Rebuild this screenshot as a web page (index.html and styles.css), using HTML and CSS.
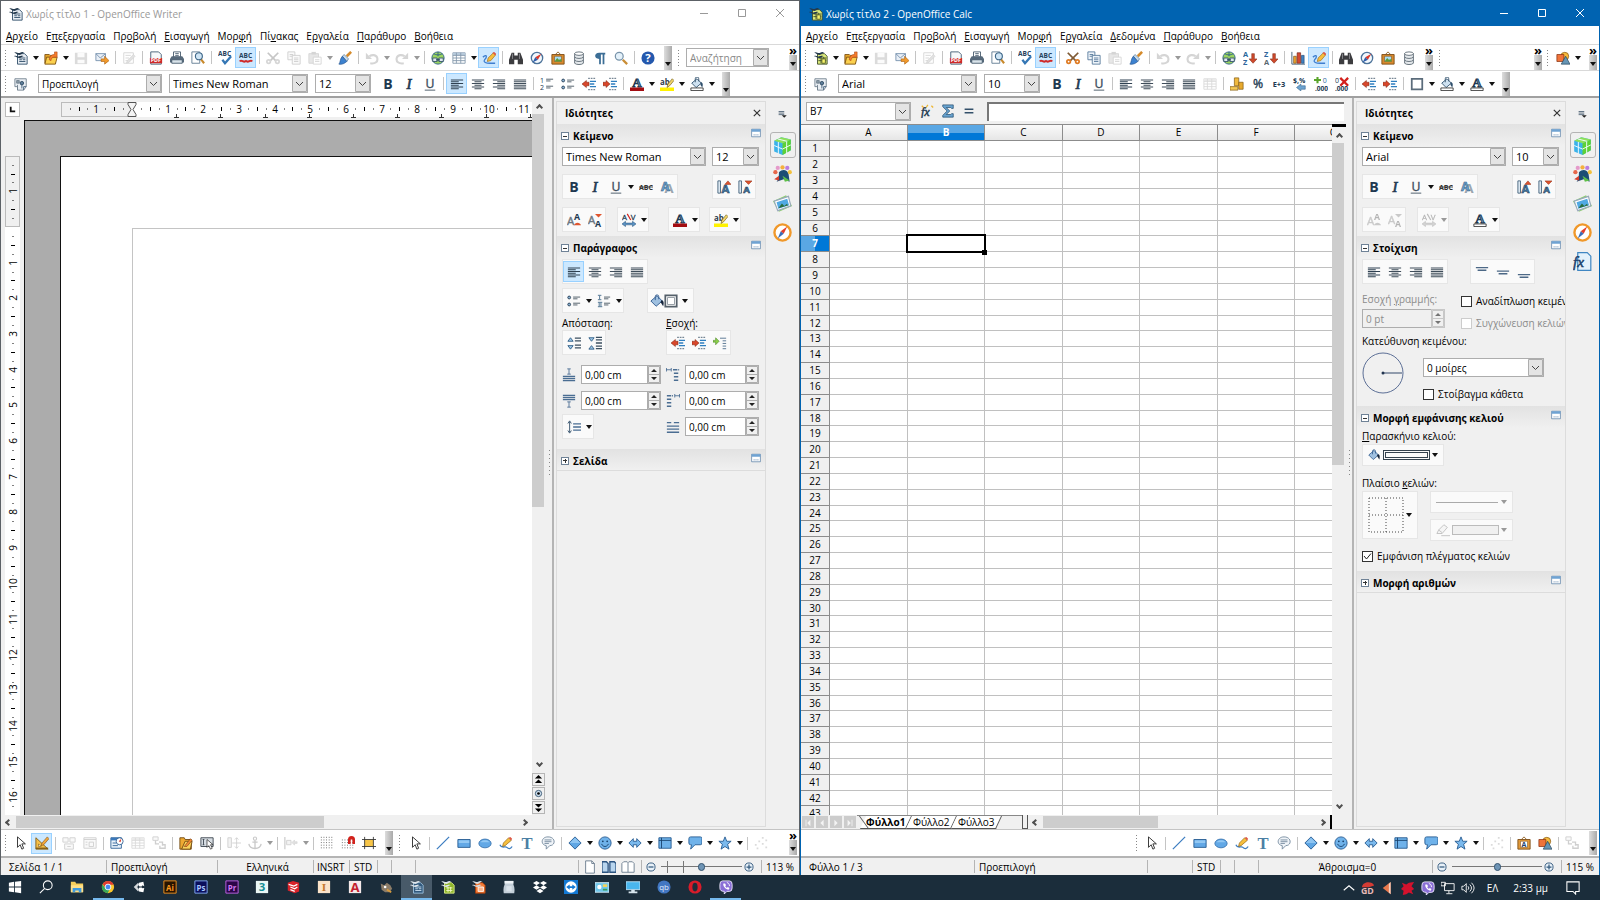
FILE: index.html
```html
<!DOCTYPE html>
<html lang="el">
<head>
  <meta charset="utf-8">
  <title>OpenOffice</title>
  <link rel="stylesheet" href="styles.css">
</head>
<body>
  <!-- Icon set, every symbol is drawn on a 16x16 box -->
  <svg class="sprite" aria-hidden="true">
    <symbol id="i-writer" viewBox="0 0 16 16"><path d="M4 3h8l3 3v9H4z" fill="#e8eef4" stroke="#2b4a66"/><path d="M6 8h7M6 10h3M6 12h7M10 10h3" stroke="#2b4a66"/><path d="M0 2c3-2 4 1 7 0 2-1 3-1 5 0-3 0-3 2.500-6 2.500S2 2 0 2zM0 6c2-1.500 3 1 6 0 2 0 2-1 5 0-2 0-3 2-5 2S2 6 0 6z" fill="#23384c"/></symbol>
    <symbol id="i-calc" viewBox="0 0 16 16"><path d="M4 3h8l3 3v9H4z" fill="#dcea7a" stroke="#3d4a2a"/><path d="M5 8h9M5 11h9M8 7v7M11 7v7" stroke="#3d4a2a"/><path d="M9 9h4v5H9z" fill="#f6f26a" stroke="#55602c"/><path d="M0 2c3-2 4 1 7 0 2-1 3-1 5 0-3 0-3 2.500-6 2.500S2 2 0 2zM0 6c2-1.500 3 1 6 0 2 0 2-1 5 0-2 0-3 2-5 2S2 6 0 6z" fill="#23384c"/></symbol>
    <symbol id="i-impress" viewBox="0 0 16 16"><path d="M4 3h8l3 3v9H4z" fill="#f47a35" stroke="#a33d0c"/><path d="M7 8h6v5H7z" fill="#f9b58d" stroke="#fff"/><path d="M0 2c3-2 4 1 7 0 2-1 3-1 5 0-3 0-3 2.500-6 2.500S2 2 0 2zM0 6c2-1.500 3 1 6 0 2 0 2-1 5 0-2 0-3 2-5 2S2 6 0 6z" fill="#d8dde2"/></symbol>
    <symbol id="i-open" viewBox="0 0 16 16"><path d="M1 4h5l1 1h6v9H1z" fill="#e7a52b" stroke="#7d5212"/><path d="M3 7h12l-2 8H1z" fill="#fbd04e" stroke="#7d5212"/><path d="M6 10c0-4 3-6 6-6V1h3v6h-3c-2 0-4 1-4 4z" fill="#f57c2a" stroke="#a94212" stroke-width=".6"/></symbol>
    <symbol id="i-save" viewBox="0 0 16 16"><path d="M1 2h14v13H1z" fill="#9a9a9a"/><path d="M4 2h8v5H4zM4 10h8v4H4z" fill="#f4f4f4"/></symbol>
    <symbol id="i-mail" viewBox="0 0 16 16"><path d="M1 3h11v8H1z" fill="#e9eff6" stroke="#7590ad"/><path d="M1 3l5 5 6-5" fill="none" stroke="#7590ad"/><path d="M7 9h4V6l5 5-5 4v-3H7z" fill="#f29a2c" stroke="#a8600e" stroke-width=".7"/></symbol>
    <symbol id="i-edit" viewBox="0 0 16 16"><path d="M2 2h11v12H2z" fill="#fff" stroke="#888"/><path d="M4 5h6M4 8h4M4 11h3" stroke="#888"/><path d="M6 11l7-7 2 2-7 7-3 1z" fill="#aaa" stroke="#777" stroke-width=".6"/></symbol>
    <symbol id="i-pen" viewBox="0 0 16 16"><path d="M1 12l2-4 6-6 4 3-6 7z" fill="#eee" stroke="#666"/><path d="M3 8l4 3M6 14.500h10" fill="none" stroke="#666"/></symbol>
    <symbol id="i-pdf" viewBox="0 0 16 16"><path d="M2 1h9l3 3v11H2z" fill="#f6f8fa" stroke="#3d5870"/><path d="M1 8h14v6H1z" fill="#cf2a2a"/><text x="2" y="13" font-size="6" font-weight="bold" fill="#fff">PDF</text></symbol>
    <symbol id="i-print" viewBox="0 0 16 16"><path d="M4 1h8v6H4z" fill="#fff" stroke="#44586a"/><path d="M2 6h12l2 3v4H0V9z" fill="#56697a"/><path d="M2 10h12v4H2z" fill="#d9e3ea" stroke="#44586a"/><path d="M6 3h4M6 5h4" stroke="#44586a"/></symbol>
    <symbol id="i-preview" viewBox="0 0 16 16"><path d="M1 1h9v13H1z" fill="#fff" stroke="#5d7890"/><path d="M11 9l4 5" stroke="#c8892b" stroke-width="2.4"/><circle cx="9" cy="6" r="4" fill="#cfe5f5" stroke="#3f6788" stroke-width="1.3"/></symbol>
    <symbol id="i-spell" viewBox="0 0 16 16"><text x="0" y="6" font-size="7.5" font-weight="bold" fill="#24425c">ABC</text><path d="M5 10l3 4 7-8" fill="none" stroke="#3577b5" stroke-width="2.6"/></symbol>
    <symbol id="i-autospell" viewBox="0 0 16 16"><text x="0" y="8" font-size="7.5" font-weight="bold" fill="#24425c">ABC</text><path d="M1 12c2-3 4 2 7-.5 3 2.500 5-2.500 7 .5" fill="none" stroke="#cf2a2a" stroke-width="2.400"/></symbol>
    <symbol id="i-cut" viewBox="0 0 16 16"><path d="M2 2l9 9M14 2l-9 9" stroke="#7f5a35" stroke-width="2"/><circle cx="3" cy="12" r="2" fill="none" stroke="#df7c25" stroke-width="2"/><circle cx="13" cy="12" r="2" fill="none" stroke="#df7c25" stroke-width="2"/></symbol>
    <symbol id="i-copy" viewBox="0 0 16 16"><path d="M1 1h8v9H1z" fill="#eef4f9" stroke="#56789a"/><path d="M3 4h4M3 6h4" stroke="#56789a"/><path d="M6 5h9v10H6z" fill="#eef4f9" stroke="#56789a"/><path d="M8 8h5M8 10h5M8 12h5" stroke="#56789a"/></symbol>
    <symbol id="i-paste" viewBox="0 0 16 16"><path d="M1 3h11v11H1z" fill="#bbb" stroke="#888"/><path d="M4 1h5v3H4z" fill="#888"/><path d="M6 7h9v8H6z" fill="#fff" stroke="#888"/><path d="M8 10h5M8 12h5" stroke="#888"/></symbol>
    <symbol id="i-brush" viewBox="0 0 16 16"><path d="M15 1l-5 5" stroke="#d58b2b" stroke-width="3"/><path d="M7 4l5 5-2 3-5-6z" fill="#c9dbea" stroke="#3b6288" stroke-width=".7"/><path d="M5 6l5 6c-2 2-6 4-9 3 2-2 1-6 4-9z" fill="#3d82cf" stroke="#1f4f8c" stroke-width=".7"/></symbol>
    <symbol id="i-undo" viewBox="0 0 16 16"><path d="M6 14c6 1 9-2 8-6-1-4-6-4-9-2" fill="none" stroke="#888" stroke-width="2.400"/><path d="M1 2v7h7z" fill="#888"/></symbol>
    <symbol id="i-redo" viewBox="0 0 16 16"><path d="M10 14c-6 1-9-2-8-6 1-4 6-4 9-2" fill="none" stroke="#888" stroke-width="2.400"/><path d="M15 2v7H8z" fill="#888"/></symbol>
    <symbol id="i-globe" viewBox="0 0 16 16"><circle cx="8" cy="8" r="7" fill="#9bd460" stroke="#2d5f86"/><path d="M3 3c3 2 7 2 10 0M8 1v5" stroke="#2d5f86" fill="none"/><path d="M2 8h5v4H2zM9 8h5v4H9z" fill="#dfe8ef" stroke="#36536b"/><path d="M6 10h4" stroke="#36536b" stroke-width="2"/></symbol>
    <symbol id="i-table" viewBox="0 0 16 16"><path d="M1 2h14v12H1z" fill="#fff" stroke="#8398ab"/><path d="M1 2h14v3H1z" fill="#b8cbdc"/><path d="M1 5h14M1 8h14M1 11h14M5 2v12M10 2v12" stroke="#8398ab"/></symbol>
    <symbol id="i-draw" viewBox="0 0 16 16"><path d="M1 7c5-4 5 0 2 3-2 3 2 4 6 4h6" fill="none" stroke="#3f7fd0" stroke-width="1.500"/><path d="M6 12l1-4 6-6 3 2-6 7z" fill="#f6bd3d" stroke="#92651a" stroke-width=".7"/><path d="M12 2l2-1 2 2-1 2z" fill="#e0564a"/></symbol>
    <symbol id="i-find" viewBox="0 0 16 16"><path d="M3 2h3v3h4V2h3l3 8v5h-6v-5H6v5H0v-5z" fill="#3c3c3f"/><path d="M4 3v6M12 3v6" stroke="#8b8b90"/></symbol>
    <symbol id="i-compass" viewBox="0 0 16 16"><circle cx="8" cy="8" r="6.500" fill="#f1f7fc" stroke="#4c7299" stroke-width="1.500"/><path d="M13 3L9 10 6 7z" fill="#db3b2c"/><path d="M3 13l3-6 3 3z" fill="#2f5ca8"/></symbol>
    <symbol id="i-gallery" viewBox="0 0 16 16"><path d="M5 4l3-3 3 3" fill="none" stroke="#8a5a1e"/><path d="M1 4h14v11H1z" fill="#d8892d" stroke="#7b4b15"/><path d="M4 6h8v6H4z" fill="#a9dcf2" stroke="#7b4b15" stroke-width=".6"/><path d="M4 12l3-4 2 2 3-1v3z" fill="#5c9b37"/></symbol>
    <symbol id="i-db" viewBox="0 0 16 16"><path d="M3 3v11c2 2 8 2 10 0V3z" fill="#e5e9ec" stroke="#5a6771"/><ellipse cx="8" cy="3" rx="5" ry="2" fill="#fff" stroke="#5a6771"/><path d="M3 7c2 2 8 2 10 0M3 10.500c2 2 8 2 10 0" fill="none" stroke="#5a6771"/></symbol>
    <symbol id="i-pilcrow" viewBox="0 0 16 16"><path d="M14 2H7C1 2 1 9 7 9v6h2V4h2v11h2V4h1z" fill="#3c6e96"/></symbol>
    <symbol id="i-zoom" viewBox="0 0 16 16"><path d="M10 10l5 5" stroke="#c98d35" stroke-width="2.600"/><circle cx="6" cy="6" r="4.500" fill="#e4f1fa" stroke="#7893a9" stroke-width="1.400"/></symbol>
    <symbol id="i-help" viewBox="0 0 16 16"><circle cx="8" cy="8" r="7.500" fill="#2458ad"/><text x="8" y="12.500" font-size="13" font-weight="bold" text-anchor="middle" fill="#fff">?</text></symbol>
    <symbol id="i-sortaz" viewBox="0 0 16 16"><text x="0" y="7" font-size="8.500" font-weight="bold" fill="#2d679c">A</text><text x="0" y="16" font-size="8.500" font-weight="bold" fill="#2d679c">Z</text><path d="M10 3h3v6h3l-4.500 5L7 9h3z" fill="#cf4a2c" stroke="#7d2512" stroke-width=".6"/></symbol>
    <symbol id="i-sortza" viewBox="0 0 16 16"><text x="0" y="7" font-size="8.500" font-weight="bold" fill="#2d679c">Z</text><text x="0" y="16" font-size="8.500" font-weight="bold" fill="#5a6670">A</text><path d="M10 3h3v6h3l-4.500 5L7 9h3z" fill="#cf4a2c" stroke="#7d2512" stroke-width=".6"/></symbol>
    <symbol id="i-chart" viewBox="0 0 16 16"><path d="M1 1v14h15" fill="none" stroke="#34536e"/><path d="M3 6h3v8H3z" fill="#eea52f" stroke="#6b4210" stroke-width=".7"/><path d="M7 2h4v12H7z" fill="#d34832" stroke="#6d1e12" stroke-width=".7"/><path d="M12 5h3v9h-3z" fill="#3e82c4" stroke="#1d4570" stroke-width=".7"/></symbol>
    <symbol id="i-shapes" viewBox="0 0 16 16"><circle cx="10" cy="6" r="4.500" fill="#f7bb3c" stroke="#80520f" stroke-width=".8"/><path d="M1 4h8v8H1z" fill="#f0743a" stroke="#832d0c" stroke-width=".8"/><path d="M11 6l5 9H6z" fill="#6695b4" stroke="#28465c" stroke-width=".8"/></symbol>
    <symbol id="i-styles" viewBox="0 0 16 16"><path d="M1 2h13v9l-3 4H4v-4H1z" fill="#e9eef3" stroke="#71808e"/><path d="M3 4h3v3H3zM4 9v6" fill="#8b9aa8" stroke="#71808e"/><circle cx="9" cy="7" r="2" fill="#5d7d99" stroke="#2f4a62"/><path d="M9 9v4M14 11h-3v4" fill="none" stroke="#3f5e7a"/></symbol>
    <symbol id="i-bold" viewBox="0 0 16 16"><text x="8" y="14" font-size="16" font-weight="bold" text-anchor="middle" fill="#203850">B</text></symbol>
    <symbol id="i-italic" viewBox="0 0 16 16"><text x="8" y="14" font-size="17" font-style="italic" text-anchor="middle" class="serif" fill="#203850" stroke="#203850" stroke-width=".7">I</text></symbol>
    <symbol id="i-underline" viewBox="0 0 16 16"><text x="8" y="12" font-size="14" text-anchor="middle" fill="#3c4d5c" stroke="#3c4d5c" stroke-width=".4">U</text><path d="M2 15h12" stroke="#3c4d5c"/></symbol>
    <symbol id="i-left" viewBox="0 0 16 16"><path d="M1 3.500h14M1 5.500h9M1 7.500h14M1 9.500h9M1 11.500h14M1 13.500h9" stroke="#2f4152" stroke-width="1.200"/></symbol>
    <symbol id="i-center" viewBox="0 0 16 16"><path d="M1 3.500h14M4 5.500h8M1 7.500h14M4 9.500h8M1 11.500h14M4 13.500h8" stroke="#3f4d5a" stroke-width="1.200"/></symbol>
    <symbol id="i-right" viewBox="0 0 16 16"><path d="M1 3.500h14M6 5.500h9M1 7.500h14M6 9.500h9M1 11.500h14M6 13.500h9" stroke="#3f4d5a" stroke-width="1.200"/></symbol>
    <symbol id="i-justify" viewBox="0 0 16 16"><path d="M1 3.500h14M1 5.500h14M1 7.500h14M1 9.500h14M1 11.500h14M1 13.500h14" stroke="#3f4d5a" stroke-width="1.200"/></symbol>
    <symbol id="i-num" viewBox="0 0 16 16"><path d="M7 2.500h8M7 4.500h5M7 10.500h8M7 12.500h5" stroke="#44525e"/><text x="0" y="7" font-size="8" fill="#203850">1</text><text x="0" y="15" font-size="8" fill="#203850">2</text></symbol>
    <symbol id="i-bul" viewBox="0 0 16 16"><circle cx="2.500" cy="4" r="1.600" fill="#8fb6d6" stroke="#203850"/><circle cx="2.500" cy="12" r="1.600" fill="#8fb6d6" stroke="#203850"/><path d="M7 3.500h8M7 5.500h5M7 10.500h8M7 12.500h5" stroke="#44525e"/></symbol>
    <symbol id="i-roman" viewBox="0 0 16 16"><path d="M1 1.500h4M3 2v4M1 6.500h4M1 9.500h5M2.500 10v4M4.500 10v4M1 14.500h5" stroke="#3f6788"/><path d="M8 3.500h7M8 5.500h5M8 10.500h7M8 12.500h5" stroke="#44525e"/></symbol>
    <symbol id="i-outdent" viewBox="0 0 16 16"><path d="M7 1.500h8M7 14.500h8" stroke="#42586b" stroke-dasharray="2 1"/><path d="M9 5h7M9 8h5M9 11h7" stroke="#2f7fc0" stroke-width="1.500"/><path d="M0 8l5-4v2h3v4H5v2z" fill="#d9472b" stroke="#7c2410" stroke-width=".6"/></symbol>
    <symbol id="i-indent" viewBox="0 0 16 16"><path d="M7 1.500h8M7 14.500h8" stroke="#42586b" stroke-dasharray="2 1"/><path d="M9 5h7M9 8h5M9 11h7" stroke="#2f7fc0" stroke-width="1.500"/><path d="M8 8L3.500 4v2H0v4h3.500v2z" fill="#d9472b" stroke="#7c2410" stroke-width=".6"/></symbol>
    <symbol id="i-hanging" viewBox="0 0 16 16"><path d="M0 5h3V2l4 4-4 4V7H0z" fill="#8bcf4a" stroke="#3f7a1a" stroke-width=".6"/><path d="M8 2.500h7M11 5.500h4M11 8.500h4M11 11.500h4M11 14.500h4" stroke="#4b6c8a"/></symbol>
    <symbol id="i-fontcolor" viewBox="0 0 16 16"><text x="8" y="11" font-size="15" font-weight="bold" text-anchor="middle" class="serif" fill="#6d98bd" stroke="#203850">A</text><path d="M0 12h16v4H0z" fill="#a30d12"/></symbol>
    <symbol id="i-fontauto" viewBox="0 0 16 16"><text x="8" y="11" font-size="15" font-weight="bold" text-anchor="middle" class="serif" fill="#6d98bd" stroke="#203850">A</text><path d="M1 12.500h14v3H1z" fill="#fff" stroke="#333"/></symbol>
    <symbol id="i-highlight" viewBox="0 0 16 16"><path d="M0 12h16v4H0z" fill="#fff200"/><text x="0" y="9" font-size="9" font-weight="bold" fill="#2e3d4a">ab</text><path d="M8 12l1-4 5-6 2 2-5 6z" fill="#f0d46a" stroke="#6d5a16" stroke-width=".7"/></symbol>
    <symbol id="i-fill" viewBox="0 0 16 16"><path d="M2 7l6-5 5 5-6 5z" fill="#cfe1f0" stroke="#2f4f6c"/><path d="M6 6V2a2 2 0 014 0v3" fill="none" stroke="#2f4f6c"/><path d="M12 6c3 0 3 3 2 6l-2-3z" fill="#2f4f6c"/><path d="M1 12.500h14v3H1z" fill="#fff" stroke="#333"/></symbol>
    <symbol id="i-bucket" viewBox="0 0 16 16"><path d="M1 8l7-6 6 6-7 6z" fill="#9fc0e0" stroke="#2b568a"/><path d="M6 7V3a2 2 0 014 0v3" fill="none" stroke="#2b568a"/><path d="M13 7c3 0 3 4 2 7l-3-5z" fill="#15243a"/></symbol>
    <symbol id="i-border" viewBox="0 0 16 16"><path d="M2 2h12v12H2z" fill="#fff" stroke="#5b6c7b" stroke-width="2"/></symbol>
    <symbol id="i-frame" viewBox="0 0 16 16"><path d="M1.500 1.500h13v13h-13z" fill="#fff" stroke="#55606a" stroke-width="2"/><path d="M4 4h8v8H4z" fill="none" stroke="#8a949c"/></symbol>
    <symbol id="i-currency" viewBox="0 0 16 16"><path d="M5 1h5v9H5z" fill="#f0b93e" stroke="#835a10" stroke-width=".8"/><path d="M10 6h5v8h-5z" fill="#e7a92c" stroke="#835a10" stroke-width=".8"/><path d="M0 11h9v4H0z" fill="#f5ca57" stroke="#835a10" stroke-width=".8"/></symbol>
    <symbol id="i-percent" viewBox="0 0 16 16"><text x="8" y="13" font-size="14" text-anchor="middle" fill="#203850" stroke="#203850" stroke-width=".4">%</text></symbol>
    <symbol id="i-exp" viewBox="0 0 16 16"><text x="8" y="11" font-size="8.500" font-weight="bold" text-anchor="middle" fill="#203850">E+3</text></symbol>
    <symbol id="i-format" viewBox="0 0 16 16"><text x="0" y="7" font-size="8" font-weight="bold" fill="#203850">$,%</text><path d="M4 12l5-4v2h5v4H9v2z" fill="#6da4d0" stroke="#2b5a84" stroke-width=".6"/></symbol>
    <symbol id="i-adddec" viewBox="0 0 16 16"><path d="M4 0v7M0 3.500h8" stroke="#5aa52b" stroke-width="2.400"/><text x="10" y="7" font-size="8" fill="#2e6aa5">0</text><text x="1" y="15.500" font-size="7.500" font-weight="bold" fill="#203850">.000</text></symbol>
    <symbol id="i-deldec" viewBox="0 0 16 16"><text x="0" y="7" font-size="8" fill="#203850">0</text><path d="M6 1l9 9M15 1l-9 9" stroke="#d2201c" stroke-width="2.600"/><text x="0" y="15.500" font-size="7.500" font-weight="bold" fill="#203850">.000</text></symbol>
    <symbol id="i-strike" viewBox="0 0 16 16"><text x="8" y="11" font-size="8" font-weight="bold" text-anchor="middle" fill="#333">ABC</text><path d="M0 8h16" stroke="#333"/></symbol>
    <symbol id="i-shadow" viewBox="0 0 16 16"><text x="5" y="15" font-size="15" font-weight="bold" fill="#9ba6b0">A</text><text x="1" y="12" font-size="14" font-weight="bold" fill="#6ea2cc" stroke="#2f5d85" stroke-width=".6">A</text></symbol>
    <symbol id="i-grow" viewBox="0 0 16 16"><path d="M1 1h3v14H1z" fill="#dbe7f1" stroke="#44627c"/><text x="5" y="15" font-size="13" font-weight="bold" fill="#477da9" stroke="#203850" stroke-width=".6">A</text><path d="M9 5l3.500-4L16 5z" fill="#e0552e" stroke="#8a2b12" stroke-width=".6"/></symbol>
    <symbol id="i-shrink" viewBox="0 0 16 16"><path d="M1 1h3v14H1z" fill="#dbe7f1" stroke="#44627c"/><text x="6" y="15" font-size="11" font-weight="bold" fill="#477da9" stroke="#203850" stroke-width=".6">A</text><path d="M8 1h8l-4 4z" fill="#e0552e" stroke="#8a2b12" stroke-width=".6"/></symbol>
    <symbol id="i-super" viewBox="0 0 16 16"><text x="0" y="14" font-size="13" fill="#6b7680" stroke="#6b7680" stroke-width=".5">A</text><text x="8" y="8" font-size="10" font-weight="bold" fill="#203850">A</text><path d="M8 14c1-4 7-4 8 0z" fill="#e0552e"/></symbol>
    <symbol id="i-sub" viewBox="0 0 16 16"><text x="0" y="12" font-size="13" fill="#6b7680" stroke="#6b7680" stroke-width=".5">A</text><text x="8" y="16" font-size="10" font-weight="bold" fill="#203850">A</text><path d="M8 1h8l-4 4z" fill="#e0552e"/></symbol>
    <symbol id="i-spacing" viewBox="0 0 16 16"><text x="0" y="8" font-size="9" fill="#203850" stroke="#203850" stroke-width=".3">A</text><text x="10" y="8" font-size="9" fill="#203850" stroke="#203850" stroke-width=".3">V</text><path d="M6 1l4 7" stroke="#d2201c" stroke-width="1.300"/><path d="M0 12.500l4-3v2h8v-2l4 3-4 3v-2H4v2z" fill="#5b93c4" stroke="#28547c" stroke-width=".6"/></symbol>
    <symbol id="i-paraup" viewBox="0 0 16 16"><path d="M1 6l3-4 3 4zM1 11h6l-3 4z" fill="#9fc8e8" stroke="#2b5a84"/><path d="M9 2.500h7M9 5.500h7M9 10.500h7M9 13.500h7" stroke="#3b4f60" stroke-width="1.500"/></symbol>
    <symbol id="i-paradown" viewBox="0 0 16 16"><path d="M1 2h6l-3 4zM1 15l3-4 3 4z" fill="#9fc8e8" stroke="#2b5a84"/><path d="M9 1.500h7M9 4.500h7M9 8h7M9 11.500h7M9 14.500h7" stroke="#3b4f60" stroke-width="1.500"/></symbol>
    <symbol id="i-above" viewBox="0 0 16 16"><path d="M1 9.500h14M1 12h14M1 14.500h14" stroke="#4a6d92" stroke-width="1.500"/><path d="M8 1v6M6 1h4M6 7h4" stroke="#4a6d92"/></symbol>
    <symbol id="i-below" viewBox="0 0 16 16"><path d="M1 1.500h14M1 4h14M1 6.500h14" stroke="#4a6d92" stroke-width="1.500"/><path d="M8 9v6M6 9h4M6 15h4" stroke="#4a6d92"/></symbol>
    <symbol id="i-before" viewBox="0 0 16 16"><path d="M0 2h6M.5 0v4M6 0v4" stroke="#4a6d92"/><path d="M8 2h7M9 6h6M9 10h6M9 14h6" stroke="#4a6d92" stroke-width="1.500" stroke-dasharray="5 1"/></symbol>
    <symbol id="i-after" viewBox="0 0 16 16"><path d="M10 2h6M10 0v4M15.500 0v4" stroke="#4a6d92"/><path d="M1 2h7M1 6h6M1 10h6M1 14h6" stroke="#4a6d92" stroke-width="1.500" stroke-dasharray="5 1"/></symbol>
    <symbol id="i-first" viewBox="0 0 16 16"><path d="M1 3h5M9 3h6M1 7h14M1 10.500h14M1 14h14" stroke="#4a6d92" stroke-width="1.500"/></symbol>
    <symbol id="i-linespace" viewBox="0 0 16 16"><path d="M3 2v12M1 4l2-3 2 3M1 12l2 3 2-3" fill="none" stroke="#2b4a66"/><path d="M7 4.500h9M7 8h9M7 11.500h9" stroke="#4a6d92" stroke-width="1.500"/></symbol>
    <symbol id="i-top" viewBox="0 0 16 16"><path d="M1 3h14M3 6h10" stroke="#4c6886" stroke-width="1.500"/></symbol>
    <symbol id="i-middle" viewBox="0 0 16 16"><path d="M1 7h14M3 10h10" stroke="#4c6886" stroke-width="1.500"/></symbol>
    <symbol id="i-bottom" viewBox="0 0 16 16"><path d="M1 11h14M3 14h10" stroke="#4c6886" stroke-width="1.500"/></symbol>
    <symbol id="i-fx" viewBox="0 0 16 16"><path d="M2 2l3 3M9 1l-2 3M13 2l2 2" stroke="#eeb62f" stroke-width="1.500"/><text x="1" y="14" font-size="14" font-style="italic" class="serif" fill="#203850" stroke="#203850" stroke-width=".5">fx</text></symbol>
    <symbol id="i-sum" viewBox="0 0 16 16"><path d="M2 1h12v4h-2l-1-1H6l4 4-4 4h5l1-1h2v4H2v-2l5-5-5-5z" fill="#69a3cf" stroke="#20496c" stroke-width=".8"/></symbol>
    <symbol id="i-equals" viewBox="0 0 16 16"><path d="M3 6h10M3 10h10" stroke="#33506a" stroke-width="1.500"/></symbol>
    <symbol id="i-more" viewBox="0 0 16 16"><path d="M1 2h14v12H1z" fill="#fff" stroke="#3f6c98"/><path d="M1 2h14v4H1z" fill="#6fa3d3"/><path d="M4 11h8" stroke="#3f6c98" stroke-dasharray="2 1"/></symbol>

    <symbol id="i-deckmenu" viewBox="0 0 16 16"><path d="M1 4h9M1 6.500h9M1 9h9" stroke="#5b6d7e" stroke-width="1.500"/><path d="M6 10h8l-4 4z" fill="#222"/></symbol>
    <symbol id="i-cube" viewBox="0 0 16 16"><path d="M1 4l6-3 8 2v9l-7 4-7-3z" fill="#3bb3ea"/><path d="M8 6l7-3v9l-7 4z" fill="#5ed135"/><path d="M1 4l6-3 8 2-7 3z" fill="#8fe05a"/><path d="M1 8l7 3 7-3.500M4.500 5v10M11.500 5v10M4 2.500l8 2" fill="none" stroke="#f0fbff" stroke-width=".8"/></symbol>
    <symbol id="i-stylist" viewBox="0 0 16 16"><path d="M5 6c3-3 7-2 8 1l1 7-5-2-6 2c2-2 2-6 2-8z" fill="#1d4d75"/><circle cx="2" cy="6" r="1.800" fill="#e6674b"/><circle cx="4" cy="2.500" r="1.800" fill="#e59acb"/><circle cx="8" cy="2" r="1.800" fill="#f3b03d"/><circle cx="12" cy="2.500" r="1.800" fill="#ba7ee0"/><circle cx="14.200" cy="6" r="1.700" fill="#f3c13d"/><path d="M8 9l6 4-4 1z" fill="#5fc04a"/><path d="M1 12l4-3v4z" fill="#d63d2d"/></symbol>
    <symbol id="i-photos" viewBox="0 0 16 16"><path d="M0 6l11-5 5 9-11 5z" fill="#8ed06c"/><path d="M1 6l12-4 2 8-11 4z" fill="#fff" stroke="#9ab"/><path d="M3 7l9-3 1.500 5.500-9 3z" fill="#51a9e3"/><path d="M4.500 12l3-4 2 2 2-1.500 1.500 1z" fill="#2d6e3b"/></symbol>
    <symbol id="i-navigator" viewBox="0 0 16 16"><circle cx="8" cy="8" r="6.800" fill="#fff" stroke="#f0982a" stroke-width="2"/><path d="M12 3L9 9 6.500 7z" fill="#e23b2a"/><path d="M4 13l2.500-6L9 9z" fill="#3c6db8"/></symbol>
    <symbol id="i-functions" viewBox="0 0 16 16"><path d="M4 .500h8l3 3v12H4z" fill="#e3f1fb" stroke="#3f86c2"/><text x="0" y="13" font-size="13" font-style="italic" class="serif" fill="#17406b" stroke="#17406b" stroke-width=".4">fx</text></symbol>

    <symbol id="i-pointer" viewBox="0 0 16 16"><path d="M4 1v12l3-3 2 5 2-1-2-5h4z" fill="#fff" stroke="#222"/></symbol>
    <symbol id="i-design" viewBox="0 0 16 16"><path d="M1 2v13h14z" fill="#f5c04a" stroke="#7f5a14"/><path d="M4 9v3h3z" fill="#fff" stroke="#7f5a14" stroke-width=".7"/><path d="M15 14H1" stroke="#7f5a14" stroke-width="1.500"/><path d="M7 11l1-3 6-7 2 2-6 7z" fill="#f3a83a" stroke="#6d3f12" stroke-width=".6"/></symbol>
    <symbol id="i-control" viewBox="0 0 16 16"><path d="M1 2h6v5H1zM9 2h6v5H9zM3 9h10v6H3z" fill="#eee" stroke="#777"/><path d="M6 12h4" stroke="#777"/></symbol>
    <symbol id="i-form" viewBox="0 0 16 16"><path d="M1 2h14v12H1z" fill="#eee" stroke="#777"/><path d="M1 4h14M7 7h5v5H7zM3 7h2M3 10h2" fill="none" stroke="#777"/></symbol>
    <symbol id="i-formnav" viewBox="0 0 16 16"><path d="M1 2h12v12H1z" fill="#eaf3fb" stroke="#2d5f93"/><path d="M1 2h12v3H1z" fill="#3a78bb"/><path d="M3 8h4M3 11h6" stroke="#2d5f93"/><circle cx="11" cy="6" r="4" fill="#fff" stroke="#2d5f93"/><path d="M13 3l-1 4-2-1z" fill="#d93c2c"/></symbol>
    <symbol id="i-order" viewBox="0 0 16 16"><path d="M1 1h6v4H1z" fill="#eee" stroke="#777"/><path d="M4 5v4h4M8 7h4v4M12 10h3v4H9v-3" fill="none" stroke="#777" stroke-width="1.500"/></symbol>
    <symbol id="i-openform" viewBox="0 0 16 16"><path d="M1 2h5l1 2h7v11H1z" fill="#efaa32" stroke="#6d4610"/><path d="M3 15l4-9h8l-2 9z" fill="#fbd35b" stroke="#6d4610"/><path d="M6 12l7-9 2 2-6 7z" fill="#f08a34" stroke="#6d2f10" stroke-width=".6"/></symbol>
    <symbol id="i-autofocus" viewBox="0 0 16 16"><path d="M1 2h14v10H1z" fill="#d7dde3" stroke="#39424b"/><path d="M4 4v6M3 4h2M3 10h2" stroke="#39424b"/><path d="M8 4v9l2-2 2 4 2-1-2-4h3z" fill="#fff" stroke="#222" stroke-width=".8"/></symbol>
    <symbol id="i-move" viewBox="0 0 16 16"><path d="M1 2h4v11H1z" fill="#ddd" stroke="#777"/><path d="M11 2v12M6 8h10M9 4l2-2 2 2M9 12l2 2 2-2" fill="none" stroke="#777"/></symbol>
    <symbol id="i-anchor" viewBox="0 0 16 16"><circle cx="8" cy="3" r="1.800" fill="none" stroke="#666" stroke-width="1.300"/><path d="M8 5v9M5 7h6M1 9c1 7 13 7 14 0" fill="none" stroke="#666" stroke-width="1.500"/></symbol>
    <symbol id="i-align" viewBox="0 0 16 16"><path d="M1 1v14" stroke="#777" stroke-width="1.500"/><path d="M3 5h5v5H3z" fill="#ddd" stroke="#777"/><path d="M9 7.500l3-3v2h3v2h-3v2z" fill="#aaa" stroke="#777" stroke-width=".6"/></symbol>
    <symbol id="i-grid" viewBox="0 0 16 16"><path d="M1 1.500h15M1 4.500h15M1 7.500h15M1 10.500h15M1 13.500h15" stroke="#555" stroke-dasharray="1 2"/></symbol>
    <symbol id="i-snap" viewBox="0 0 16 16"><path d="M1 4.500h15M1 7.500h15M1 10.500h15M1 13.500h15" stroke="#555" stroke-dasharray="1 2"/><path d="M8 9V4a4 4 0 018 0v5h-3V4h-2v5z" fill="#d2221c"/></symbol>
    <symbol id="i-guides" viewBox="0 0 16 16"><path d="M3 4h10v8H3z" fill="#f7c548"/><path d="M0 4h16M0 12h16M3 1v14M13 1v14" stroke="#333"/></symbol>
    <symbol id="i-line" viewBox="0 0 16 16"><path d="M1 15L15 1" stroke="#3b7cc0" stroke-width="1.500"/></symbol>
    <symbol id="i-rect" viewBox="0 0 16 16"><path d="M1 4h14v9H1z" fill="#62a8e6" stroke="#24588f"/><path d="M2 5h12v3H2z" fill="#93c8f3"/></symbol>
    <symbol id="i-ellipse" viewBox="0 0 16 16"><ellipse cx="8" cy="8.500" rx="7" ry="5" fill="#62a8e6" stroke="#3a74ae"/><path d="M3 7c2-3 8-3 10 0z" fill="#93c8f3"/></symbol>
    <symbol id="i-pencil" viewBox="0 0 16 16"><path d="M1 10c2 5 6 1 8 3s4 2 6-1" fill="none" stroke="#3b7cc0" stroke-width="1.500"/><path d="M4 12l1-4 6-6 3 3-7 6z" fill="#f6bf3f" stroke="#84590f" stroke-width=".7"/><path d="M11 2l2-1 2 2-1 2z" fill="#df5a48"/></symbol>
    <symbol id="i-text" viewBox="0 0 16 16"><text x="8" y="15" font-size="19" font-weight="bold" text-anchor="middle" class="serif" fill="#4b7fa4">T</text></symbol>
    <symbol id="i-callout" viewBox="0 0 16 16"><path d="M8 1c9 0 9 10 2 10l-4 4v-4C-1 10 0 1 8 1z" fill="#f0f4f8" stroke="#71879b"/><path d="M4 4.500h8M4 6.500h8M4 8.500h5" stroke="#71879b"/></symbol>
    <symbol id="i-diamond" viewBox="0 0 16 16"><path d="M8 1l7 7-7 7-7-7z" fill="#5fa6e4" stroke="#24588f"/><path d="M8 2l6 6H2z" fill="#8dc4f1"/></symbol>
    <symbol id="i-smiley" viewBox="0 0 16 16"><circle cx="8" cy="8" r="7" fill="#6fb2ea" stroke="#24588f"/><circle cx="5.500" cy="6" r="1" fill="#17406b"/><circle cx="10.500" cy="6" r="1" fill="#17406b"/><path d="M4 9c2 4 6 4 8 0" fill="none" stroke="#17406b"/></symbol>
    <symbol id="i-arrows" viewBox="0 0 16 16"><path d="M1 8l5-5v3h4V3l5 5-5 5v-3H6v3z" fill="#7ab9ed" stroke="#24588f"/></symbol>
    <symbol id="i-flow" viewBox="0 0 16 16"><path d="M1 2h14v12H1z" fill="#6fb2ea" stroke="#24588f"/><path d="M4 2v12M1 5h14" stroke="#17406b"/></symbol>
    <symbol id="i-speech" viewBox="0 0 16 16"><path d="M3 1h11q2 0 2 2v5q0 2-2 2H8l-5 5 1-5H3Q1 10 1 8V3q0-2 2-2z" fill="#6fb2ea" stroke="#24588f"/></symbol>
    <symbol id="i-star" viewBox="0 0 16 16"><path d="M8 1l2 5h5l-4 3.500 1.500 5.500L8 12l-4.500 3L5 9.500 1 6h5z" fill="#7ab9ed" stroke="#24588f"/></symbol>
    <symbol id="i-points" viewBox="0 0 16 16"><path d="M1 9h2v2H1zM5 5h2v2H5zM9 8h2v2H9zM13 12h2v2h-2zM3 13h2v2H3zM9 1h2v2H9zM13 4h2v2h-2z" fill="#999"/></symbol>
    <symbol id="i-fontwork" viewBox="0 0 16 16"><path d="M5 4l3-3 3 3" fill="none" stroke="#8a5a1e"/><path d="M1 4h14v11H1z" fill="#e29a3a" stroke="#7b4b15"/><path d="M4 6h8v7H4z" fill="#fff" stroke="#7b4b15" stroke-width=".6"/><text x="8" y="12.500" font-size="8" font-weight="bold" text-anchor="middle" fill="#1d4570">A</text></symbol>
    <symbol id="i-page1" viewBox="0 0 16 16"><path d="M3 1h7l3 3v11H3z" fill="#fff" stroke="#66788a"/><path d="M10 1v3h3" fill="none" stroke="#66788a"/></symbol>
    <symbol id="i-page2" viewBox="0 0 16 16"><path d="M0 2h5l2 2v10H0zM9 2h5l2 2v10H9z" fill="#b8d5ee" stroke="#2c5480" stroke-width="1.500"/></symbol>
    <symbol id="i-book" viewBox="0 0 16 16"><path d="M1 4l2-2h4l1 1 1-1h4l2 2v10H1z" fill="#fff" stroke="#66788a"/><path d="M8 3v11" stroke="#66788a"/></symbol>
    <symbol id="i-minus" viewBox="0 0 16 16"><circle cx="8" cy="8" r="6.500" fill="#e7f0f8" stroke="#345a7e" stroke-width="1.500"/><path d="M4 8h8" stroke="#345a7e" stroke-width="2"/></symbol>
    <symbol id="i-plus" viewBox="0 0 16 16"><circle cx="8" cy="8" r="6.500" fill="#e7f0f8" stroke="#345a7e" stroke-width="1.500"/><path d="M4 8h8M8 4v8" stroke="#345a7e" stroke-width="2"/></symbol>

    <symbol id="i-writer-app" viewBox="0 0 16 16"><path d="M4 3h8l3 3v9H4z" fill="#31597d" stroke="#9fc3e0"/><path d="M6 8h7M6 10h3M6 12h7M10 10h3" stroke="#cfe3f3"/><path d="M0 2c3-2 4 1 7 0 2-1 3-1 5 0-3 0-3 2.500-6 2.500S2 2 0 2zM0 6c2-1.500 3 1 6 0 2 0 2-1 5 0-2 0-3 2-5 2S2 6 0 6z" fill="#dfe6ec"/></symbol>
    <symbol id="i-calc-app" viewBox="0 0 16 16"><path d="M4 3h8l3 3v9H4z" fill="#8fb62a" stroke="#dff08e"/><path d="M6 9h7M6 12h7M8 8v6M11 8v6" stroke="#f2f9c9"/><path d="M0 2c3-2 4 1 7 0 2-1 3-1 5 0-3 0-3 2.500-6 2.500S2 2 0 2zM0 6c2-1.500 3 1 6 0 2 0 2-1 5 0-2 0-3 2-5 2S2 6 0 6z" fill="#dfe6ec"/></symbol>
    <symbol id="i-windows" viewBox="0 0 16 16"><path d="M1 3l6-1v5.500H1zM8 2l7-1v6.500H8zM1 8.500h6V14l-6-1zM8 8.500h7V15l-7-1z" fill="#fff"/></symbol>
    <symbol id="i-search" viewBox="0 0 16 16"><circle cx="10" cy="6" r="5" fill="none" stroke="#fff" stroke-width="1.200"/><path d="M6.500 9.500L1 15" stroke="#fff" stroke-width="1.200"/></symbol>
    <symbol id="i-explorer" viewBox="0 0 16 16"><path d="M1 2h5l1 2h8v10H1z" fill="#f6cf5c"/><path d="M1 6h14v8H1z" fill="#ffe08a"/><path d="M3 14V9h10v5h-3v-2H6v2z" fill="#3f9be0"/></symbol>
    <symbol id="i-chrome" viewBox="0 0 16 16"><circle cx="8" cy="8" r="7" fill="#f8c52c"/><path d="M2 4.500a7 7 0 0112.500 1H8L5 9z" fill="#e03c31"/><path d="M1.600 5a7 7 0 006 10l3-5.500-5 .5z" fill="#3aa757"/><circle cx="8" cy="8" r="3.300" fill="#4688f1" stroke="#fff"/></symbol>
    <symbol id="i-unity" viewBox="0 0 16 16"><path d="M2 8l5-5 1 2-2 3 2 3-1 2z" fill="#d5d9dc"/><path d="M8 3l5-1 1 5-2-1-1 1.500H8.500L7.500 6zM8 13l5 1 1-5-2 .5-1-1H8.500L7.500 10z" fill="#fff"/></symbol>
    <symbol id="i-ai" viewBox="0 0 16 16"><path d="M1 1h14v14H1z" fill="#261300" stroke="#ff9a1f"/><text x="8" y="12" font-size="9" text-anchor="middle" font-weight="bold" fill="#ff9a1f">Ai</text></symbol>
    <symbol id="i-ps" viewBox="0 0 16 16"><path d="M1 1h14v14H1z" fill="#0a0f5c" stroke="#8cb4ff"/><text x="8" y="12" font-size="9" text-anchor="middle" font-weight="bold" fill="#a9c8ff">Ps</text></symbol>
    <symbol id="i-pr" viewBox="0 0 16 16"><path d="M1 1h14v14H1z" fill="#2c0548" stroke="#c868ef"/><text x="8" y="12" font-size="9" text-anchor="middle" font-weight="bold" fill="#d47cf5">Pr</text></symbol>
    <symbol id="i-max" viewBox="0 0 16 16"><path d="M1 1h14v14H1z" fill="#e9f6f5"/><text x="8" y="13" font-size="13" text-anchor="middle" font-weight="bold" fill="#148e97">3</text></symbol>
    <symbol id="i-sketchup" viewBox="0 0 16 16"><path d="M2 3l6-2 7 2v10l-5 2-8-3z" fill="#d8232a"/><path d="M3 5l6 2 4-2M5 8l5 2 3-2M5 11l5 2" fill="none" stroke="#fff" stroke-width="1.400"/></symbol>
    <symbol id="i-inventor" viewBox="0 0 16 16"><path d="M1 1h14v14H1z" fill="#fbe3c9"/><text x="8" y="13" font-size="13" text-anchor="middle" font-weight="bold" class="serif" fill="#c5792b">I</text></symbol>
    <symbol id="i-autocad" viewBox="0 0 16 16"><path d="M1 1h14v14H1z" fill="#f5e9ea"/><text x="8" y="14" font-size="15" text-anchor="middle" font-weight="bold" fill="#c41f2f">A</text></symbol>
    <symbol id="i-gimp" viewBox="0 0 16 16"><path d="M2 4l4 2 3-3 4 3 2 4-3 4H7l-4-3z" fill="#8b7c68"/><circle cx="7" cy="8" r="1.500" fill="#fff"/><path d="M9 11l5 3" stroke="#d69a3d" stroke-width="2"/></symbol>
    <symbol id="i-bin" viewBox="0 0 16 16"><path d="M3 1h10v4q2 4 1 10H2Q1 9 3 5z" fill="#c3cfd9"/><path d="M3 1h10v3H3z" fill="#eef3f7"/><path d="M5 7h6v6H5z" fill="#d9e2ea"/></symbol>
    <symbol id="i-dropbox" viewBox="0 0 16 16"><path d="M4 1l4 2.500L4 6 0 3.500zM12 1l4 2.500L12 6 8 3.500zM4 6l4 2.500L4 11 0 8.500zM12 6l4 2.500-4 2.500-4-2.500zM8 10l4 2.500L8 15l-4-2.500z" fill="#fff"/></symbol>
    <symbol id="i-teamviewer" viewBox="0 0 16 16"><path d="M0 0h16v16H0z" fill="#1379d4"/><circle cx="8" cy="8" r="6.500" fill="#fff"/><path d="M2.500 8l4-3v2h3V5l4 3-4 3V9h-3v2z" fill="#1379d4"/></symbol>
    <symbol id="i-control-panel" viewBox="0 0 16 16"><path d="M0 3h16v11H0z" fill="#6fc6ea" stroke="#d8eef8"/><circle cx="5" cy="8" r="2.500" fill="#fff"/><path d="M9 5h5v3H9z" fill="#f4d35c"/><path d="M9 10h5v2H9z" fill="#3e9c5a"/></symbol>
    <symbol id="i-pc" viewBox="0 0 16 16"><path d="M0 2h16v9H0z" fill="#49b6ee" stroke="#bfe4f8"/><path d="M6 11h4v2h3v2H3v-2h3z" fill="#d6e4ec"/></symbol>
    <symbol id="i-qb" viewBox="0 0 16 16"><circle cx="8" cy="8" r="7.500" fill="#4377c2"/><text x="8" y="11" font-size="9" text-anchor="middle" fill="#e4eefb">qb</text></symbol>
    <symbol id="i-opera" viewBox="0 0 16 16"><circle cx="8" cy="8" r="7.500" fill="#d81c2a"/><ellipse cx="8" cy="8" rx="3" ry="5" fill="#1d2d3a"/></symbol>
    <symbol id="i-viber" viewBox="0 0 16 16"><path d="M4 1h8q3 0 3 4v4q0 4-3 4H9l-3 3v-3q-5 0-5-4V5q0-4 3-4z" fill="#8a6fd6" stroke="#efeafc"/><path d="M5 4c-1 3 3 7 6 7l1-2-2-1-1 1-2-2 1-1-1-2z" fill="#fff"/><path d="M9 3c2 0 3 2 3 4" fill="none" stroke="#fff"/></symbol>
    <symbol id="i-chevron" viewBox="0 0 16 16"><path d="M1 11l7-6 7 6" fill="none" stroke="#fff" stroke-width="1.400"/></symbol>
    <symbol id="i-gd" viewBox="0 0 16 16"><path d="M1 7c1-7 12-7 14-2L9 7z" fill="#d33b34"/><text x="0" y="15" font-size="10" font-weight="bold" fill="#e9b9b6">GD</text></symbol>
    <symbol id="i-horn" viewBox="0 0 16 16"><path d="M2 8l9-7v14z" fill="#e8794d"/><path d="M9 3l2-2v14l-2-2z" fill="#f5d0c0"/></symbol>
    <symbol id="i-splat" viewBox="0 0 16 16"><path d="M1 2l5 2 3-2 6-1-3 5 3 3-3 2 2 4-5-2-3 2-4 1 1-5-3-2 3-3z" fill="#d4122d"/></symbol>
    <symbol id="i-network" viewBox="0 0 16 16"><path d="M4 3h11v8H4zM9 11v3M6 14.500h7M0 1.500h5v4H0z" fill="#1c2d3a" stroke="#fff"/></symbol>
    <symbol id="i-volume" viewBox="0 0 16 16"><path d="M1 6h2l3-3v10L3 10H1zM8 6q2 2 0 4M10 4q4 4 0 8M12 2q6 6 0 12" fill="none" stroke="#fff"/></symbol>
    <symbol id="i-action" viewBox="0 0 16 16"><path d="M1 1h14v11h-4v3l-3-3H1z" fill="none" stroke="#fff" stroke-width="1.200"/></symbol>
  </svg>

  <main class="desktop">
    <!-- Writer -->
    <section class="window writer">
      <header class="titlebar">
        <svg class="icon"><use href="#i-writer"/></svg>
        <h1>Χωρίς τίτλο 1 - OpenOffice Writer</h1>
        <div class="caption">
          <button aria-label="Ελαχιστοποίηση"><svg viewBox="0 0 10 10"><path d="M1 5.500h8"/></svg></button>
          <button aria-label="Μεγιστοποίηση"><svg viewBox="0 0 10 10"><path d="M1.500 1.500h7v7h-7z"/></svg></button>
          <button aria-label="Κλείσιμο"><svg viewBox="0 0 10 10"><path d="M1 1l8 8M9 1l-8 8"/></svg></button>
        </div>
      </header>
      <nav class="menubar">
        <button><u>Α</u>ρχείο</button>
        <button>Ε<u>π</u>εξεργασία</button>
        <button>Πρ<u>ο</u>βολή</button>
        <button><u>Ε</u>ισαγωγή</button>
        <button>Μορ<u>φ</u>ή</button>
        <button>Πί<u>ν</u>ακας</button>
        <button>Ε<u>ρ</u>γαλεία</button>
        <button><u>Π</u>αράθυρο</button>
        <button><u>Β</u>οήθεια</button>
      </nav>
      <div class="toolbar">
        <div class="tools" data-items=": writer v open v save! mail | edit! | pdf print preview | spell autospell* | cut! copy! paste! v! brush | undo! v! redo! v! | globe table v draw* | find compass gallery db pilcrow zoom | help"></div>
        <div class="tools end" data-items="> :"></div>
        <select class="search" aria-label="Αναζήτηση"><option>Αναζήτηση</option></select>
        <div class="tools last" data-items=">>"></div>
      </div>
      <div class="toolbar">
        <div class="tools" data-items=": styles"></div>
        <select class="style-name" aria-label="Στυλ"><option>Προεπιλογή</option></select>
        <select class="font-name" aria-label="Γραμματοσειρά"><option>Times New Roman</option></select>
        <select class="font-size" aria-label="Μέγεθος"><option>12</option></select>
        <div class="tools" data-items="bold italic underline | left* center right justify | num bul outdent indent | fontcolor v highlight v fill v"></div>
        <div class="tools end" data-items=">"></div>
      </div>

      <div class="work">
        <div class="editor">
          <div class="hruler">
            <button class="tab-kind" aria-label="Στηλοθέτης"><svg viewBox="0 0 10 10"><path d="M3 2v5h5" fill="none" stroke="#111" stroke-width="2"/></svg></button>
            <svg class="ruler" data-origin="71"></svg>
          </div>
          <div class="canvas">
            <svg class="ruler vertical" data-origin="71"></svg>
            <div class="desk">
              <div class="page"><div class="text-area"></div></div>
            </div>
          </div>
          <div class="hscroll"><i class="arrow left"></i><div class="thumb"></div><i class="arrow right"></i></div>
        </div>
        <div class="vscroll">
          <i class="arrow up"></i>
          <div class="track"><div class="thumb"></div></div>
          <i class="arrow down"></i>
          <button aria-label="Προηγούμενη σελίδα"><svg viewBox="0 0 10 10"><path d="M5 0l4 4H1zM5 5l4 4H1z"/></svg></button>
          <button aria-label="Περιήγηση"><svg viewBox="0 0 10 10"><circle cx="5" cy="5" r="3.500" fill="#cfe0ef" stroke="#33536f"/><circle cx="5" cy="5" r="1.500"/></svg></button>
          <button aria-label="Επόμενη σελίδα"><svg viewBox="0 0 10 10"><path d="M5 5L1 1h8zM5 10L1 6h8z"/></svg></button>
        </div>
        <div class="sash"></div>
        <aside class="sidebar">
          <div class="panel">
            <div class="panel-title"><h2>Ιδιότητες</h2><button aria-label="Κλείσιμο"><svg viewBox="0 0 10 10"><path d="M1 1l8 8M9 1l-8 8"/></svg></button></div>
            <h3 class="head"><i class="fold"></i>Κείμενο<svg class="icon"><use href="#i-more"/></svg></h3>
            <div class="body">
              <div class="row">
                <select class="wide" aria-label="Γραμματοσειρά"><option>Times New Roman</option></select>
                <select class="narrow" aria-label="Μέγεθος"><option>12</option></select>
              </div>
              <div class="row">
                <div class="tools group" data-items="bold italic underline v strike shadow"></div>
                <div class="tools group to-right" data-items="grow shrink"></div>
              </div>
              <div class="row">
                <div class="tools group" data-items="super sub"></div>
                <div class="tools group near" data-items="spacing v"></div>
                <div class="tools group far" data-items="fontcolor v"></div>
                <div class="tools group" data-items="highlight v"></div>
              </div>
            </div>
            <h3 class="head"><i class="fold"></i>Παράγραφος<svg class="icon"><use href="#i-more"/></svg></h3>
            <div class="body tight">
              <div class="row"><div class="tools group" data-items="left* center right justify"></div></div>
              <div class="row pair">
                <div class="tools group" data-items="bul v roman v"></div>
                <div class="tools group pull" data-items="bucket frame v"></div>
              </div>
              <div class="row pair labels"><span>Απόσταση:</span><span><u>Ε</u>σοχή:</span></div>
              <div class="row pair">
                <div class="tools group" data-items="paraup paradown"></div>
                <div class="tools group" data-items="outdent indent hanging"></div>
              </div>
              <div class="spins">
                <label class="spin"><svg class="icon"><use href="#i-above"/></svg><input value="0,00 cm" aria-label="Πάνω"><i></i></label>
                <label class="spin"><svg class="icon"><use href="#i-before"/></svg><input value="0,00 cm" aria-label="Πριν"><i></i></label>
                <label class="spin"><svg class="icon"><use href="#i-below"/></svg><input value="0,00 cm" aria-label="Κάτω"><i></i></label>
                <label class="spin"><svg class="icon"><use href="#i-after"/></svg><input value="0,00 cm" aria-label="Μετά"><i></i></label>
                <div class="tools group" data-items="linespace v"></div>
                <label class="spin"><svg class="icon"><use href="#i-first"/></svg><input value="0,00 cm" aria-label="Πρώτη γραμμή"><i></i></label>
              </div>
            </div>
            <h3 class="head closed"><i class="fold"></i>Σελίδα<svg class="icon"><use href="#i-more"/></svg></h3>
          </div>
          <div class="deck" data-tabs="deckmenu cube* stylist photos navigator"></div>
        </aside>
      </div>

      <div class="toolbar bottom">
        <div class="tools" data-items=": pointer design* | control! form! | formnav table! order! | openform autofocus | move! anchor! v! | align! v! | grid snap guides"></div>
        <div class="tools end" data-items="> : pointer | line rect ellipse pencil text callout | diamond v smiley v arrows v flow v speech v star v | points!"></div>
        <div class="tools last" data-items=">>"></div>
      </div>
      <footer class="statusbar">
        <span class="s-page">Σελίδα 1 / 1</span>
        <span class="s-style">Προεπιλογή</span>
        <span class="s-lang">Ελληνικά</span>
        <span class="s-mode">INSRT</span>
        <span class="s-std">STD</span>
        <span class="s-gap"></span>
        <span class="s-sign"></span>
        <span class="s-fill"></span>
        <span class="s-views"><svg class="icon"><use href="#i-page1"/></svg><svg class="icon"><use href="#i-page2"/></svg><svg class="icon"><use href="#i-book"/></svg></span>
        <span class="s-zoom"><svg class="icon"><use href="#i-minus"/></svg><input type="range" class="ticks" aria-label="Εστίαση"><svg class="icon"><use href="#i-plus"/></svg></span>
        <span class="s-pct">113 %</span>
      </footer>
    </section>

    <!-- Calc -->
    <section class="window calc active">
      <header class="titlebar">
        <svg class="icon"><use href="#i-calc"/></svg>
        <h1>Χωρίς τίτλο 2 - OpenOffice Calc</h1>
        <div class="caption">
          <button aria-label="Ελαχιστοποίηση"><svg viewBox="0 0 10 10"><path d="M1 5.500h8"/></svg></button>
          <button aria-label="Μεγιστοποίηση"><svg viewBox="0 0 10 10"><path d="M1.500 1.500h7v7h-7z"/></svg></button>
          <button aria-label="Κλείσιμο"><svg viewBox="0 0 10 10"><path d="M1 1l8 8M9 1l-8 8"/></svg></button>
        </div>
      </header>
      <nav class="menubar">
        <button><u>Α</u>ρχείο</button>
        <button>Ε<u>π</u>εξεργασία</button>
        <button>Πρ<u>ο</u>βολή</button>
        <button><u>Ε</u>ισαγωγή</button>
        <button>Μορ<u>φ</u>ή</button>
        <button>Ε<u>ρ</u>γαλεία</button>
        <button><u>Δ</u>εδομένα</button>
        <button><u>Π</u>αράθυρο</button>
        <button><u>Β</u>οήθεια</button>
      </nav>
      <div class="toolbar">
        <div class="tools" data-items=": calc v open v save! mail | edit! | pdf print preview | spell autospell* | cut copy paste! brush | undo! v! redo! v! | globe sortaz sortza | chart draw* | find compass gallery db"></div>
        <div class="tools end" data-items=">> :"></div>
        <div class="tools last" data-items=">> : shapes v >>"></div>
      </div>
      <div class="toolbar">
        <div class="tools" data-items=": styles"></div>
        <select class="font-name" aria-label="Γραμματοσειρά"><option>Arial</option></select>
        <select class="font-size" aria-label="Μέγεθος"><option>10</option></select>
        <div class="tools" data-items="bold italic underline | left center right justify table! | currency percent exp format adddec deldec | outdent indent | border v fill v fontauto v"></div>
        <div class="tools end" data-items=">"></div>
      </div>

      <div class="work">
        <div class="sheet">
          <div class="formula">
            <select aria-label="Όνομα"><option>B7</option></select>
            <div class="tools" data-items="fx sum equals"></div>
            <input type="text" aria-label="Γραμμή εισαγωγής">
          </div>
          <div class="sheet-view">
            <div class="cells">
              <table>
                <thead><tr id="columns"><th class="corner"></th></tr></thead>
                <tbody id="rows"></tbody>
              </table>
            </div>
            <div class="vscroll">
              <div class="split"></div>
              <i class="arrow up"></i>
              <div class="track"><div class="thumb"></div></div>
              <i class="arrow down"></i>
            </div>
          </div>
          <div class="sheet-tabs">
            <button class="jump" disabled aria-label="Πρώτο"><svg viewBox="0 0 10 10"><path d="M2 1v8h1V1zM8 1v8L4 5z"/></svg></button>
            <button class="jump" disabled aria-label="Προηγούμενο"><svg viewBox="0 0 10 10"><path d="M7 1v8L3 5z"/></svg></button>
            <button class="jump" disabled aria-label="Επόμενο"><svg viewBox="0 0 10 10"><path d="M3 1v8l4-4z"/></svg></button>
            <button class="jump" disabled aria-label="Τελευταίο"><svg viewBox="0 0 10 10"><path d="M2 1v8l4-4zM7 1v8h1V1z"/></svg></button>
            <div class="tabs">
              <button class="on"><span>Φύλλο1</span></button>
              <button><span>Φύλλο2</span></button>
              <button><span>Φύλλο3</span></button>
            </div>
            <div class="grab"></div>
            <div class="hscroll"><i class="arrow left"></i><div class="thumb"></div><i class="arrow right"></i></div>
            <div class="split"></div>
          </div>
        </div>
        <div class="sash"></div>
        <aside class="sidebar">
          <div class="panel">
            <div class="panel-title"><h2>Ιδιότητες</h2><button aria-label="Κλείσιμο"><svg viewBox="0 0 10 10"><path d="M1 1l8 8M9 1l-8 8"/></svg></button></div>
            <h3 class="head"><i class="fold"></i>Κείμενο<svg class="icon"><use href="#i-more"/></svg></h3>
            <div class="body">
              <div class="row">
                <select class="wide" aria-label="Γραμματοσειρά"><option>Arial</option></select>
                <select class="narrow" aria-label="Μέγεθος"><option>10</option></select>
              </div>
              <div class="row">
                <div class="tools group" data-items="bold italic underline v strike shadow"></div>
                <div class="tools group to-right" data-items="grow shrink"></div>
              </div>
              <div class="row">
                <div class="tools group" data-items="super! sub!"></div>
                <div class="tools group near" data-items="spacing! v!"></div>
                <div class="tools group far" data-items="fontauto v"></div>
              </div>
            </div>
            <h3 class="head"><i class="fold"></i>Στοίχιση<svg class="icon"><use href="#i-more"/></svg></h3>
            <div class="body tight">
              <div class="row">
                <div class="tools group" data-items="left center right justify"></div>
                <div class="tools group far" data-items="top middle bottom"></div>
              </div>
              <div class="row align-opts">
                <div class="indent">
                  <label class="dim" for="indent">Εσοχή <u>γ</u>ραμμής:</label>
                  <div class="spin off"><input id="indent" value="0 pt" disabled><i></i></div>
                </div>
                <div class="checks">
                  <label class="check"><input type="checkbox">Αναδίπλωση κειμένου</label>
                  <label class="check dim"><input type="checkbox" disabled>Συγχώνευση κελιών</label>
                </div>
              </div>
              <label for="angle">Κατεύθυνση κειμένου:</label>
              <div class="row rotate">
                <svg class="dial" viewBox="0 0 42 42"><circle cx="21" cy="21" r="20" fill="none" stroke="#5c6f96"/><path d="M21 21h19" stroke="#33496b"/><circle cx="21" cy="21" r="1.500" fill="#22344f"/></svg>
                <div class="rotate-side">
                  <select id="angle"><option>0 μοίρες</option></select>
                  <label class="check"><input type="checkbox">Στοίβαγμα κάθετα</label>
                </div>
              </div>
            </div>
            <h3 class="head"><i class="fold"></i>Μορφή εμφάνισης κελιού<svg class="icon"><use href="#i-more"/></svg></h3>
            <div class="body look">
              <span class="caption-text"><u>Π</u>αρασκήνιο κελιού:</span>
              <button class="swatch" aria-label="Παρασκήνιο κελιού"><svg class="icon"><use href="#i-bucket"/></svg><b></b><i class="drop"></i></button>
              <span class="caption-text second">Πλαίσιο <u>κ</u>ελιών:</span>
              <div class="row frames">
                <button class="frame-kind" aria-label="Πλαίσιο"><svg viewBox="0 0 36 36"><path d="M1 1h34v34H1zM18 1v34M1 18h34" fill="none" stroke="#444" stroke-dasharray="1 2"/></svg><i class="drop"></i></button>
                <div class="frame-lines">
                  <button disabled aria-label="Στυλ γραμμής"><hr><i class="drop"></i></button>
                  <button disabled aria-label="Χρώμα γραμμής"><svg class="icon"><use href="#i-pen"/></svg><b></b><i class="drop"></i></button>
                </div>
              </div>
              <label class="check gridlines"><input type="checkbox" checked>Εμφάνιση πλέγματος κελιών</label>
            </div>
            <h3 class="head closed"><i class="fold"></i>Μορφή αριθμών<svg class="icon"><use href="#i-more"/></svg></h3>
          </div>
          <div class="deck" data-tabs="deckmenu cube* stylist photos navigator functions"></div>
        </aside>
      </div>

      <div class="toolbar bottom">
        <div class="tools last" data-items=": pointer | line rect ellipse pencil text callout | diamond v smiley v arrows v flow v speech v star v | points! | fontwork shapes | order! >"></div>
      </div>
      <footer class="statusbar">
        <span class="c-page">Φύλλο 1 / 3</span>
        <span class="c-style">Προεπιλογή</span>
        <span class="c-mode"></span>
        <span class="s-std">STD</span>
        <span class="s-gap"></span>
        <span class="s-sign"></span>
        <span class="s-fill sum">Άθροισμα=0</span>
        <span class="c-zoom"><svg class="icon"><use href="#i-minus"/></svg><input type="range" aria-label="Εστίαση"><svg class="icon"><use href="#i-plus"/></svg></span>
        <span class="s-pct">115 %</span>
      </footer>
    </section>
  </main>

  <nav class="taskbar">
    <div class="apps" data-apps="windows search explorer chrome+ unity ai ps pr max sketchup inventor autocad gimp writer-app* calc-app impress bin dropbox teamviewer control-panel pc qb opera viber+"></div>
    <div class="tray">
      <svg class="icon"><use href="#i-chevron"/></svg>
      <svg class="icon"><use href="#i-gd"/></svg>
      <svg class="icon"><use href="#i-horn"/></svg>
      <svg class="icon"><use href="#i-splat"/></svg>
      <svg class="icon"><use href="#i-viber"/></svg>
      <svg class="icon"><use href="#i-network"/></svg>
      <svg class="icon"><use href="#i-volume"/></svg>
      <span class="lang">ΕΛ</span>
      <time>2:33 μμ</time>
      <svg class="icon"><use href="#i-action"/></svg>
    </div>
  </nav>

  <script src="app.js"></script>
</body>
</html>
```

FILE: styles.css
```css
* {
  box-sizing: border-box;
}
body {
  margin: 0;
  height: 100vh;
  display: flex;
  flex-direction: column;
  overflow: hidden;
  background: #1b2d3b;
  color: #000;
  font: 10px/14px "Open Sans", "Noto Sans", sans-serif;
}
button, input, select {
  font: inherit;
  color: inherit;
  margin: 0;
}
button {
  padding: 0;
  border: 0;
  background: none;
}
h1, h2, h3 {
  margin: 0;
  font-size: 10px;
}
u {
  text-underline-offset: 1px;
}
.sprite {
  display: none;
}
.serif {
  font-family: "Liberation Serif", serif;
}
.icon {
  width: 14px;
  height: 14px;
  flex: none;
}

/* windows */
.desktop {
  flex: 1;
  min-height: 0;
  display: flex;
}
.window {
  flex: 1;
  min-width: 0;
  display: flex;
  flex-direction: column;
  background: #fff;
  border: 1px solid #5c6166;
  border-bottom: 0;
}
.window.active {
  border-color: #0063b1;
}
.titlebar {
  height: 25px;
  display: flex;
  align-items: center;
  gap: 3px;
  padding-left: 8px;
  color: #999;
}
.titlebar h1 {
  font-weight: normal;
}
.active .titlebar {
  background: #0063b1;
  color: #fff;
}
.caption {
  margin-left: auto;
  display: flex;
}
.caption button {
  width: 38px;
  height: 24px;
}
.caption svg {
  width: 10px;
  height: 10px;
  fill: none;
  stroke: currentColor;
}
.menubar {
  height: 18px;
  display: flex;
  align-items: center;
  gap: 8px;
  padding: 1px 0 0 5px;
}

/* toolbars */
.toolbar {
  height: 26px;
  display: flex;
  align-items: center;
  border-top: 1px solid #d9d9d9;
}
.tools {
  display: flex;
  align-items: center;
}
.tools button {
  width: 21px;
  height: 21px;
  display: flex;
  align-items: center;
  justify-content: center;
}
.tools button.on {
  background: #cce8ff;
  border: 1px solid #99d1ff;
}
.tools button:disabled svg {
  filter: grayscale(1);
  opacity: .35;
}
.tools .drop-btn {
  width: 9px;
}
.drop {
  border: 3px solid transparent;
  border-top: 4px solid #111;
  border-bottom: 0;
}
:disabled .drop {
  border-top-color: #999;
}
.sep {
  width: 6px;
  height: 13px;
  background: linear-gradient(#c4c4c4, #c4c4c4) center / 1px 100% no-repeat;
}
.grip {
  width: 3px;
  height: 16px;
  margin: 0 3px;
  background: repeating-linear-gradient(#888 0 1px, transparent 1px 3px) center / 1px 100% no-repeat;
}
.end {
  margin-left: 6px;
}
.end .grip {
  margin: 0 4px 0 5px;
}
.last {
  margin-left: auto;
  padding-right: 2px;
}
.last .grip {
  margin-left: 4px;
}
.tools .overflow {
  width: 8px;
  height: 24px;
  flex-direction: column;
  justify-content: flex-end;
  padding-bottom: 4px;
  background: linear-gradient(90deg, #ddd, #aaa);
  font-size: 13px;
  font-weight: bold;
  line-height: 8px;
}
.tools .overflow.more {
  justify-content: space-between;
  background: linear-gradient(#fff 9px, transparent 9px), linear-gradient(90deg, #ddd, #aaa);
}
.last .overflow:last-child {
  margin-left: 7px;
}
select {
  height: 19px;
  padding: 0 17px 0 3px;
  border: 1px solid #adadad;
  border-radius: 0;
  appearance: none;
  background: #fff url("data:image/svg+xml,%3Csvg xmlns='http://www.w3.org/2000/svg' width='15' height='17'%3E%3Cpath d='M.5.500h14v16H.5z' fill='%23e4e4e4' stroke='%23adadad'/%3E%3Cpath d='M4 7l3.500 3.500L11 7' fill='none' stroke='%23444'/%3E%3C/svg%3E") right center no-repeat;
}
.toolbar select {
  margin-left: 7px;
}
.toolbar .style-name {
  width: 124px;
}
.toolbar .font-name {
  width: 139px;
}
.toolbar .font-size {
  width: 56px;
  margin-right: 6px;
}
.toolbar .search {
  width: 83px;
  margin-left: 2px;
  color: #888;
}
.font-name, .font-size, .wide, .narrow {
  font-size: 11px;
}

/* work area */
.work {
  flex: 1;
  min-height: 0;
  display: flex;
  background: #f0f0f0;
  border-top: 2px solid #a0a0a0;
}
.editor {
  flex: 1;
  min-width: 0;
  display: flex;
  flex-direction: column;
}
.hruler {
  height: 22px;
  display: flex;
  padding: 4px 0 0 4px;
}
.tab-kind {
  width: 15px;
  height: 15px;
  display: flex;
  align-items: center;
  justify-content: center;
  border: 1px solid #bbb;
  background: #fff;
}
.tab-kind svg {
  width: 9px;
  height: 9px;
}
.ruler {
  flex: 1;
  min-width: 0;
  height: 16px;
  margin-left: 41px;
  text-anchor: middle;
}
.ruler.vertical {
  flex: none;
  width: 15px;
  height: 100%;
  margin: 36px 4px 0;
}
.canvas {
  flex: 1;
  min-height: 0;
  display: flex;
  overflow: hidden;
}
.desk {
  flex: 1;
  padding: 35px 0 0 35px;
  background: #acacac;
  border: 1px solid #111;
  border-width: 1px 0 0 1px;
}
.page {
  height: 100%;
  padding: 71px 0 0 71px;
  background: #fff;
  border: 1px solid #111;
  border-width: 1px 0 0 1px;
}
.text-area {
  height: 100%;
  border: 1px solid #c4c4c4;
  border-width: 1px 0 0 1px;
}
.thumb {
  background: #cdcdcd;
}
.arrow {
  width: 5px;
  height: 5px;
  flex: none;
  border: 2px solid #505050;
  border-width: 2px 0 0 2px;
}
.arrow.up {
  margin: 7px auto 4px;
  transform: rotate(45deg);
}
.arrow.down {
  margin: 2px auto 7px;
  transform: rotate(225deg);
}
.arrow.left {
  margin: 0 5px;
  transform: rotate(-45deg);
}
.arrow.right {
  margin: 0 5px;
  transform: rotate(135deg);
}
.hscroll {
  height: 14px;
  display: flex;
  align-items: center;
  justify-content: space-between;
}
.hscroll .thumb {
  width: 58%;
  height: 12px;
  margin-right: auto;
}
.vscroll {
  width: 14px;
  flex: none;
  display: flex;
  flex-direction: column;
  padding-bottom: 14px;
}
.track {
  flex: 1;
}
.vscroll .thumb {
  width: 12px;
  height: 61%;
}
.vscroll button {
  width: 13px;
  height: 13px;
  margin-bottom: 1px;
  display: flex;
  align-items: center;
  justify-content: center;
  border: 1px solid #b5b5b5;
}
.vscroll button svg {
  width: 9px;
  height: 9px;
}
.sash {
  width: 8px;
  border: 1px solid #b4b4b4;
  border-width: 0 2px 0 0;
  background: repeating-linear-gradient(#888 0 1px, transparent 1px 4px) 3px center / 1px 28px no-repeat;
}

/* sheet */
.sheet {
  flex: 1;
  min-width: 0;
  display: flex;
  flex-direction: column;
}
.formula {
  height: 26px;
  display: flex;
  align-items: center;
  padding-left: 5px;
}
.formula select {
  width: 105px;
  margin-right: 5px;
}
.formula > input {
  flex: 1;
  min-width: 0;
  height: 19px;
  margin: 0 2px 0 8px;
  background: #fff;
  border: 1px solid #777;
  border-width: 2px 0 0 2px;
}
.sheet-view {
  flex: 1;
  min-height: 0;
  display: flex;
}
.cells {
  flex: 1;
  min-width: 0;
  overflow: hidden;
  background: #fff;
}
table {
  width: 571px;
  table-layout: fixed;
  border-collapse: separate;
  border-spacing: 0;
  line-height: 13px;
}
thead th {
  width: 77px;
  height: 17px;
  padding: 0;
  font-weight: normal;
  border: 1px solid #8c8c8c;
  border-width: 1px 1px 1px 0;
  background: linear-gradient(#fafafa, #e6e6e6);
}
thead th:nth-child(2n) {
  width: 78px;
}
thead .corner {
  width: 29px;
}
th.on {
  color: #fff;
  font-weight: bold;
  background: linear-gradient(#5aa7e4 50%, #0078d7 50%);
}
tbody tr {
  height: 16px;
}
tbody tr:nth-child(6n) {
  height: 15px;
}
tbody th {
  padding: 0;
  font-weight: normal;
  background: #f0f0f0;
  border: 1px solid #8c8c8c;
  border-width: 0 1px 1px 0;
}
tbody th.on {
  font-weight: bold;
  background: linear-gradient(90deg, #5aa7e4 50%, #0078d7 50%);
}
td {
  padding: 0;
  border: 1px solid #c0c0c0;
  border-width: 0 1px 1px 0;
}
td.cursor {
  position: relative;
}
td.cursor::before {
  content: "";
  position: absolute;
  inset: -2px;
  border: 2px solid #000;
}
td.cursor::after {
  content: "";
  position: absolute;
  right: -3px;
  bottom: -4px;
  width: 5px;
  height: 5px;
  background: #000;
}
.sheet .vscroll {
  padding: 0;
}
.vscroll .split {
  height: 3px;
  background: #000;
}
.sheet .vscroll .thumb {
  height: 49%;
}
.sheet-tabs {
  height: 14px;
  display: flex;
  padding-right: 14px;
}
.jump {
  width: 12px;
  margin: 1px;
  background: #ccc;
}
.jump svg {
  width: 8px;
  height: 8px;
  fill: #f4f4f4;
}
.tabs {
  width: 165px;
  display: flex;
  padding-left: 6px;
  border-top: 1px solid #888;
}
.tabs button {
  width: 45px;
  background: #fff;
  border: 1px solid #555;
  border-width: 0 1px 1px 0;
  transform: skewX(-25deg);
  line-height: 12px;
}
.tabs button span {
  display: block;
  transform: skewX(25deg);
}
.tabs button.on {
  position: relative;
  width: 46px;
  font-weight: bold;
}
.tabs button.on::before {
  content: "";
  position: absolute;
  inset: 0 auto 0 0;
  border-left: 1px solid #555;
  transform: skewX(50deg);
}
.grab {
  width: 6px;
  border: 1px solid #555;
  border-top: 0;
}
.sheet-tabs .hscroll {
  flex: 1;
}
.sheet-tabs .hscroll .thumb {
  width: 38%;
}
.sheet-tabs .split {
  width: 2px;
  background: #000;
}

/* sidebar */
.sidebar {
  width: 245px;
  flex: none;
  display: flex;
  padding: 3px 0 2px 2px;
}
.panel {
  width: 210px;
  overflow: hidden;
  border: 1px solid #dcdcdc;
}
.panel-title {
  height: 22px;
  display: flex;
  align-items: center;
  justify-content: space-between;
  padding: 0 4px 0 8px;
}
.panel-title svg {
  width: 8px;
  height: 8px;
  fill: none;
  stroke: #333;
  stroke-width: 1.5;
}
.head {
  height: 22px;
  display: flex;
  align-items: center;
  gap: 4px;
  padding: 2px 4px 0;
  background: linear-gradient(#e2e2e2, #f0f0f0);
}
.head .icon {
  width: 10px;
  height: 10px;
  margin: 0 0 6px auto;
}
.fold {
  width: 8px;
  height: 8px;
  border: 1px solid #6f8296;
  background: linear-gradient(#333, #333) center / 4px 1px no-repeat #fff;
}
.closed {
  border-bottom: 1px solid #dcdcdc;
}
.closed .fold {
  background: linear-gradient(#333, #333) center / 4px 1px no-repeat, linear-gradient(#333, #333) center / 1px 4px no-repeat #fff;
}
.body {
  display: flex;
  flex-direction: column;
  gap: 8px;
  padding: 1px 5px 4px;
  white-space: nowrap;
}
.body.tight {
  gap: 4px;
  padding-bottom: 5px;
}
.row {
  display: flex;
}
.wide {
  width: 144px;
  margin-right: 6px;
}
.narrow {
  width: 47px;
}
.group {
  height: 25px;
  background: #fafafa;
  border: 1px solid #e6e6e6;
}
.to-right {
  margin-left: 34px;
}
.near {
  margin-left: 11px;
}
.far {
  margin: 0 9px 0 19px;
}
.body.tight .far {
  margin-left: 22px;
}
.pair {
  display: grid;
  grid-template-columns: 104px 1fr;
  justify-items: start;
}
.pull {
  margin-left: -19px;
  padding: 0 2px;
}
.pull button {
  width: 14px;
}
.pull .drop-btn {
  width: 13px;
}
.labels {
  height: 12px;
  margin: -1px 0 -2px;
}
.spins {
  display: grid;
  grid-template-columns: 99px 93px;
  column-gap: 5px;
  row-gap: 7px;
  justify-items: start;
  margin-top: 6px;
}
.spins .group {
  margin: -3px 0 5px;
}
.spin {
  width: 100%;
  height: 19px;
  display: flex;
  align-items: center;
}
.spin .icon {
  margin-right: 5px;
}
.spin input {
  flex: 1;
  width: 0;
  height: 19px;
  padding: 0 3px;
  border: 1px solid #adadad;
  border-right: 0;
  background: #fff;
}
.spin i {
  width: 14px;
  height: 19px;
  border: 1px solid #adadad;
  background: url("data:image/svg+xml,%3Csvg xmlns='http://www.w3.org/2000/svg' width='12' height='17'%3E%3Cpath d='M.5.500h11v16H.5zM0 8.500h12' fill='%23f0f0f0' stroke='%23adadad'/%3E%3Cpath d='M6 3l3 3H3zM6 14l-3-3h6z' fill='%23222'/%3E%3C/svg%3E") center no-repeat;
}
.off i {
  opacity: .6;
}
.dim, .spin.off input {
  color: #8c8c8c;
}
.spin.off input {
  background: #f0f0f0;
}
.align-opts {
  gap: 16px;
  margin: 4px 0 0;
}
.indent {
  width: 83px;
  flex: none;
}
.indent label {
  display: block;
  margin-bottom: 3px;
}
.checks {
  display: flex;
  flex-direction: column;
  gap: 8px;
  padding-top: 2px;
}
.check {
  display: flex;
  align-items: center;
  gap: 4px;
}
.check input {
  width: 11px;
  height: 11px;
  flex: none;
  appearance: none;
  border: 1px solid #333;
  background: #fff;
}
.check input:disabled {
  border-color: #ccc;
}
.check input:checked {
  background: #fff url("data:image/svg+xml,%3Csvg xmlns='http://www.w3.org/2000/svg' width='9' height='9'%3E%3Cpath d='M1 4l2.500 3L8 1.500' fill='none' stroke='%23222'/%3E%3C/svg%3E") center no-repeat;
}
.dial {
  width: 42px;
  height: 42px;
  margin-right: 19px;
}
.rotate-side {
  display: flex;
  flex-direction: column;
  gap: 10px;
  padding-top: 6px;
}
.rotate-side select {
  width: 121px;
}
.look {
  gap: 1px;
  padding-bottom: 8px;
}
.second {
  margin-top: 9px;
}
.swatch, .frame-kind, .frame-lines button {
  display: flex;
  align-items: center;
  justify-content: space-between;
  padding: 0 5px;
  background: #fafafa;
  border: 1px solid #e6e6e6;
}
.swatch {
  width: 82px;
  height: 22px;
}
.swatch .icon {
  width: 12px;
}
.swatch b {
  width: 47px;
  height: 10px;
  border: 3px double #34424e;
}
.frame-kind {
  width: 56px;
  height: 48px;
}
.frame-kind svg {
  width: 36px;
  height: 36px;
}
.frame-lines {
  display: flex;
  flex-direction: column;
  gap: 6px;
  margin-left: 12px;
}
.frame-lines button {
  width: 83px;
  height: 22px;
}
.frame-lines hr {
  width: 62px;
  margin: 0;
  border: 0;
  border-top: 1px solid #aaa;
}
.frame-lines b {
  width: 47px;
  height: 10px;
  border: 1px solid #bbb;
  background: #f0f0f0;
}
.frame-lines .icon {
  opacity: .4;
}
.gridlines {
  margin-top: 7px;
}
.deck {
  flex: 1;
  display: flex;
  flex-direction: column;
  align-items: center;
  gap: 3px;
}
.deck button {
  width: 26px;
  height: 26px;
  display: flex;
  align-items: center;
  justify-content: center;
  border-radius: 3px;
}
.deck button:first-child {
  margin-bottom: 2px;
}
.deck .icon {
  width: 19px;
  height: 19px;
}
.deck button:first-child .icon {
  width: 10px;
  height: 10px;
}
.deck .on {
  border: 1px solid #b4b4b4;
}

/* status bar */
.bottom {
  height: 27px;
  border-top-color: #c4c4c4;
}
.statusbar {
  height: 19px;
  display: flex;
  align-items: center;
  padding: 0 2px 0 4px;
  background: #f0f0f0;
  border-top: 2px solid #b4b4b4;
  white-space: nowrap;
}
.statusbar span {
  height: 13px;
  display: flex;
  align-items: center;
  padding-left: 4px;
  border-right: 1px solid #b4b4b4;
}
.statusbar .s-page { width: 102px; }
.statusbar .s-style { width: 111px; }
.statusbar .s-lang { width: 96px; justify-content: center; }
.statusbar .s-mode { width: 36px; padding-left: 3px; }
.statusbar .s-std { width: 28px; }
.statusbar .s-gap { width: 14px; }
.statusbar .s-sign { width: 24px; }
.statusbar .s-fill { flex: 1; }
.statusbar .sum { justify-content: center; }
.statusbar .s-views { width: 63px; gap: 5px; }
.statusbar .s-zoom { width: 120px; padding-right: 7px; }
.statusbar .c-page { width: 170px; }
.statusbar .c-style { width: 173px; }
.statusbar .c-mode { width: 45px; }
.statusbar .c-zoom { width: 129px; padding-right: 7px; }
.statusbar .s-pct {
  width: 35px;
  border: 0;
}
.s-zoom .icon, .c-zoom .icon {
  width: 10px;
  height: 10px;
}
input[type="range"] {
  flex: 1;
  min-width: 0;
  height: 12px;
  margin: 0 2px 0 5px;
  appearance: none;
  background: linear-gradient(#777, #777) center / 100% 1px no-repeat;
}
input.ticks {
  background: linear-gradient(#777, #777) center / 100% 1px no-repeat, linear-gradient(#777, #777) 8% 0 / 1px 12px no-repeat, linear-gradient(#777, #777) 28% 0 / 1px 12px no-repeat;
}
input[type="range"]::-webkit-slider-thumb {
  width: 7px;
  height: 8px;
  appearance: none;
  background: #6e94b5;
  border: 1px solid #33536f;
  border-radius: 4px;
}

/* taskbar */
.taskbar {
  height: 25px;
  display: flex;
  justify-content: space-between;
  color: #fff;
}
.apps {
  width: 741px;
  display: flex;
}
.apps button {
  flex: 1;
  display: flex;
  align-items: center;
  justify-content: center;
  border-bottom: 2px solid transparent;
}
.apps .run {
  border-color: #76b9ed;
}
.apps .on {
  border-color: #76b9ed;
  background: #485a69;
}
.tray {
  display: flex;
  align-items: center;
  gap: 6px;
  padding-right: 20px;
}
.tray .icon:first-child {
  width: 12px;
}
.tray .lang {
  margin: 0 9px 0 6px;
}
.tray time {
  margin-right: 12px;
}
```

FILE: app.js
```js
const svgIcon = name => `<svg class="icon"><use href="#i-${name}"/></svg>`;

// Toolbars: ":" grip, "|" separator, "v" drop-down, ">" overflow, "!" disabled, "*" pressed
document.querySelectorAll('.tools').forEach(bar => {
  bar.innerHTML = bar.dataset.items.split(' ').map(item => {
    if (item === ':') return '<i class="grip"></i>';
    if (item === '|') return '<i class="sep"></i>';
    if (item === '>') return '<button class="overflow" aria-label="overflow"><i class="drop"></i></button>';
    if (item === '>>') return '<button class="overflow more">»<i class="drop"></i></button>';
    const off = item.endsWith('!') ? ' disabled' : '';
    const on = item.endsWith('*') ? ' class="on"' : '';
    const name = item.replace(/[!*]/, '');
    if (name === 'v') return `<button class="drop-btn" aria-label="menu"${off}><i class="drop"></i></button>`;
    return `<button aria-label="${name}"${on}${off}>${svgIcon(name)}</button>`;
  }).join('');
});

document.querySelectorAll('.deck').forEach(deck => {
  deck.innerHTML = deck.dataset.tabs.split(' ').map(tab => {
    const name = tab.replace('*', '');
    return `<button aria-label="${name}"${tab !== name ? ' class="on"' : ''}>${svgIcon(name)}</button>`;
  }).join('');
});

const apps = document.querySelector('.apps');
apps.innerHTML = apps.dataset.apps.split(' ').map(app => {
  const name = app.replace(/[+*]/, '');
  const state = app.endsWith('+') ? 'run' : app.endsWith('*') ? 'on' : '';
  return `<button class="${state}" aria-label="${name}">${svgIcon(name)}</button>`;
}).join('');

// Rulers, one centimetre at the current zoom
const CM = 35.65;
document.querySelectorAll('.ruler').forEach(ruler => {
  const origin = Number(ruler.dataset.origin);
  const vertical = ruler.classList.contains('vertical');
  const last = vertical ? 16 : 11;
  let out = vertical
    ? '<rect width="15" height="2000" fill="#fff"/><rect x=".5" y=".5" width="14" height="70" fill="#f0f0f0" stroke="#bbb"/>'
    : '<rect width="2000" height="15" fill="#fff"/><rect x=".5" y=".5" width="70" height="14" fill="#f0f0f0" stroke="#bbb"/>';
  for (let n = -2; n <= last; n++) {
    const at = Math.round(origin + n * CM);
    if (n !== 0 && n !== -2) {
      out += vertical
        ? `<text transform="translate(12 ${at}) rotate(-90)">${Math.abs(n)}</text>`
        : `<text x="${at}" y="11">${Math.abs(n)}</text>`;
    }
    [0.25, 0.5, 0.75].forEach(q => {
      const p = Math.round(origin + (n + q) * CM);
      const len = q === 0.5 ? 4 : 1;
      out += vertical
        ? `<rect x="${8 - len / 2}" y="${p}" width="${len}" height="1"/>`
        : `<rect x="${p}" y="${7 - len / 2}" width="1" height="${len}"/>`;
    });
  }
  if (!vertical) {
    for (let t = 1; t < 10; t++) {
      const x = Math.round(origin + t * CM * 1.24);
      out += `<path d="M${x - 2} 15.500h5M${x + 0.5} 12v3" stroke="#333"/>`;
    }
    out += `<path d="M${origin - 4} .5h8v2l-3 5 3 5v2h-8v-2l3-5-3-5z" fill="#f4f4f4" stroke="#555"/>`;
  }
  ruler.innerHTML = out;
});

// Sheet
const columns = document.getElementById('columns');
const letters = ['A', 'B', 'C', 'D', 'E', 'F', 'G'];
letters.forEach(letter => {
  const th = document.createElement('th');
  th.textContent = letter;
  if (letter === 'B') th.className = 'on';
  columns.appendChild(th);
});
const rows = document.getElementById('rows');
for (let r = 1; r <= 43; r++) {
  const tr = document.createElement('tr');
  const th = document.createElement('th');
  th.textContent = r;
  if (r === 7) th.className = 'on';
  tr.appendChild(th);
  letters.forEach(letter => {
    const td = document.createElement('td');
    if (r === 7 && letter === 'B') td.className = 'cursor';
    tr.appendChild(td);
  });
  rows.appendChild(tr);
}
```
